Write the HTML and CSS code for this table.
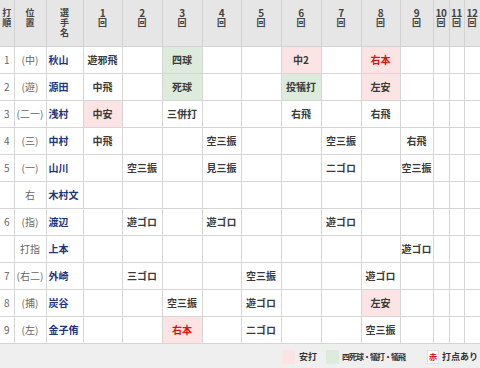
FILE: index.html
```html
<!DOCTYPE html>
<html lang="ja">
<head>
<meta charset="utf-8">
<link rel="stylesheet" href="styles.css">
</head>
<body>
<div class="wrap">
<table class="score">
<colgroup>
<col class="c-no"><col class="c-pos"><col class="c-name">
<col class="c1"><col class="c2"><col class="c3"><col class="c4"><col class="c5"><col class="c6"><col class="c7"><col class="c8"><col class="c9"><col class="c10"><col class="c11"><col class="c12">
</colgroup>
<thead>
<tr>
<th class="lbl"><span class="k">打</span><span class="k">順</span></th><th class="lbl"><span class="k">位</span><span class="k">置</span></th><th class="lbl"><span class="k">選</span><span class="k">手</span><span class="k">名</span></th>
<th><span class="n">1</span><span class="k">回</span></th><th><span class="n">2</span><span class="k">回</span></th><th><span class="n">3</span><span class="k">回</span></th><th><span class="n">4</span><span class="k">回</span></th><th><span class="n">5</span><span class="k">回</span></th><th><span class="n">6</span><span class="k">回</span></th><th><span class="n">7</span><span class="k">回</span></th><th><span class="n">8</span><span class="k">回</span></th><th><span class="n">9</span><span class="k">回</span></th><th><span class="n">10</span><span class="k">回</span></th><th><span class="n">11</span><span class="k">回</span></th><th><span class="n">12</span><span class="k">回</span></th>
</tr>
</thead>
<tbody>
<tr><td class="no">1</td><td class="pos">(中)</td><td class="name">秋山</td><td>遊邪飛</td><td></td><td class="bb">四球</td><td></td><td></td><td class="hit">中2</td><td></td><td class="hit red">右本</td><td></td><td></td><td></td><td></td></tr>
<tr><td class="no">2</td><td class="pos">(遊)</td><td class="name">源田</td><td>中飛</td><td></td><td class="bb">死球</td><td></td><td></td><td class="bb">投犠打</td><td></td><td class="hit">左安</td><td></td><td></td><td></td><td></td></tr>
<tr><td class="no">3</td><td class="pos">(二一)</td><td class="name">浅村</td><td class="hit">中安</td><td></td><td>三併打</td><td></td><td></td><td>右飛</td><td></td><td>右飛</td><td></td><td></td><td></td><td></td></tr>
<tr><td class="no">4</td><td class="pos">(三)</td><td class="name">中村</td><td>中飛</td><td></td><td></td><td>空三振</td><td></td><td></td><td>空三振</td><td></td><td>右飛</td><td></td><td></td><td></td></tr>
<tr><td class="no">5</td><td class="pos">(一)</td><td class="name">山川</td><td></td><td>空三振</td><td></td><td>見三振</td><td></td><td></td><td>二ゴロ</td><td></td><td>空三振</td><td></td><td></td><td></td></tr>
<tr><td class="no"></td><td class="pos">右</td><td class="name">木村文</td><td></td><td></td><td></td><td></td><td></td><td></td><td></td><td></td><td></td><td></td><td></td><td></td></tr>
<tr><td class="no">6</td><td class="pos">(指)</td><td class="name">渡辺</td><td></td><td>遊ゴロ</td><td></td><td>遊ゴロ</td><td></td><td></td><td>遊ゴロ</td><td></td><td></td><td></td><td></td><td></td></tr>
<tr><td class="no"></td><td class="pos">打指</td><td class="name">上本</td><td></td><td></td><td></td><td></td><td></td><td></td><td></td><td></td><td>遊ゴロ</td><td></td><td></td><td></td></tr>
<tr><td class="no">7</td><td class="pos">(右二)</td><td class="name">外崎</td><td></td><td>三ゴロ</td><td></td><td></td><td>空三振</td><td></td><td></td><td>遊ゴロ</td><td></td><td></td><td></td><td></td></tr>
<tr><td class="no">8</td><td class="pos">(捕)</td><td class="name">炭谷</td><td></td><td></td><td>空三振</td><td></td><td>遊ゴロ</td><td></td><td></td><td class="hit">左安</td><td></td><td></td><td></td><td></td></tr>
<tr><td class="no">9</td><td class="pos">(左)</td><td class="name">金子侑</td><td></td><td></td><td class="hit red">右本</td><td></td><td>二ゴロ</td><td></td><td></td><td>空三振</td><td></td><td></td><td></td><td></td></tr>
</tbody>
</table>
<div class="legend">
<span class="sw sw-hit"></span><span class="lt">安打</span>
<span class="sw sw-bb"></span><span class="lt lt-bb">四死球・犠打・犠飛</span>
<span class="sw sw-red">赤</span><span class="lt last">打点あり</span>
</div>
</div>
</body>
</html>
```
FILE: styles.css
```css
html, body {
  margin: 0;
  padding: 0;
  background: #fff;
}
body {
  font-family: "Noto Sans CJK JP", "Noto Sans", sans-serif;
  font-size: 10px;
  color: #333;
  width: 480px;
  height: 368px;
  overflow: hidden;
}
.wrap {
  width: 480px;
}
.score {
  border-collapse: collapse;
  table-layout: fixed;
  width: 480px;
}
.c-no { width: 14px; }
.c-pos { width: 32px; }
.c-name { width: 37px; }
.c1 { width: 39px; }
.c2 { width: 40px; }
.c3 { width: 40px; }
.c4 { width: 39px; }
.c5 { width: 40px; }
.c6 { width: 40px; }
.c7 { width: 40px; }
.c8 { width: 39px; }
.c9 { width: 33px; }
.c10 { width: 16px; }
.c11 { width: 15px; }
.c12 { width: 16px; }

.score th {
  background: #e6e6e6;
  border: 1px solid #d2d2d2;
  border-top: none;
  height: 46px;
  padding: 7px 0 0 0;
  box-sizing: border-box;
  vertical-align: top;
  font-weight: bold;
  color: #444;
  text-align: center;
  white-space: nowrap;
}
.score th.lbl {
  padding-top: 8px;
}
.score th:first-child { border-left: none; }
.score th .k {
  display: block;
  font-size: 9px;
  line-height: 10px;
  height: 10px;
}
.score th .n {
  display: block;
  font-size: 10px;
  line-height: 11px;
  height: 11px;
  letter-spacing: -0.3px;
}
.score td {
  border: 1px solid #d6d6d6;
  height: 26px;
  padding: 0;
  text-align: center;
  vertical-align: middle;
  font-weight: bold;
  color: #3a3a3a;
  line-height: 12px;
  white-space: nowrap;
  overflow: hidden;
}
.score td:first-child { border-left: none; }
.score td.no {
  font-weight: normal;
  color: #666;
}
.score td.pos {
  font-weight: normal;
  color: #666;
}
.score td.name {
  text-align: left;
  padding-left: 2px;
  color: #22347a;
}
.score td.hit {
  background: #fde4e4;
}
.score td.bb {
  background: #dcebdc;
}
.score td.red {
  color: #dd1111;
}
.legend {
  background: #efefef;
  height: 26px;
  display: flex;
  align-items: center;
  justify-content: flex-end;
  font-weight: bold;
  color: #333;
  font-size: 9px;
  padding-right: 2px;
}
.sw {
  width: 13px;
  height: 14px;
  box-sizing: border-box;
  display: inline-flex;
  align-items: center;
  justify-content: center;
}
.sw-hit { background: #fde4e4; }
.sw-bb { background: #dcebdc; }
.sw-red {
  width: 12px;
  background: #fff;
  border: 1px solid #e0e0e0;
  color: #dd1111;
  font-size: 8px;
}
.lt {
  margin: 0 9px 0 4px;
}
.lt-bb {
  font-size: 8px;
  letter-spacing: -1px;
  margin-left: 3px;
  margin-right: 22px;
}
.lt.last {
  margin-right: 0;
  margin-left: 3px;
}
```
